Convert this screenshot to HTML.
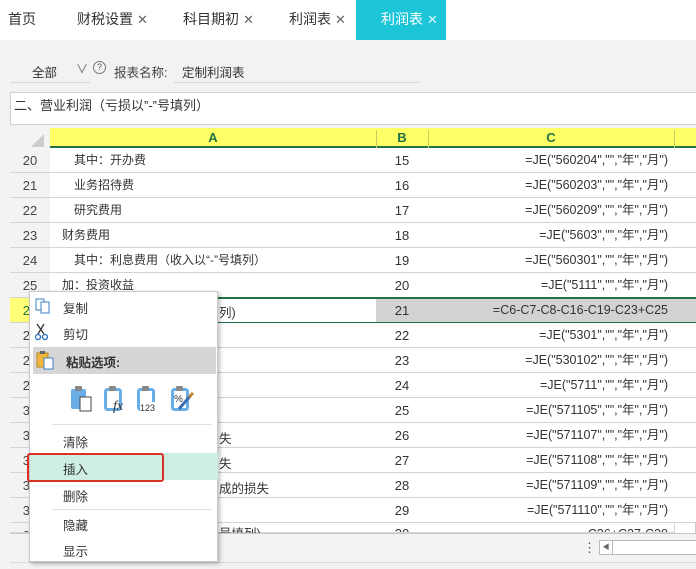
<!DOCTYPE html>
<html><head><meta charset="utf-8"><style>
*{margin:0;padding:0;box-sizing:border-box}
body{width:696px;height:569px;overflow:hidden;background:#f2f2f2;font-family:"Liberation Sans","Noto Sans CJK SC",sans-serif;font-size:12px;color:#333;position:relative}
.a{position:absolute}
.tabs{left:0;top:0;width:696px;height:40px;background:#fff}
.tab{top:0;height:40px;line-height:38px;font-size:14px;color:#333}
.x{font-size:13px;color:#666;margin-left:4px}
.cell{position:absolute;height:25px;line-height:25px;border-right:1px solid #d4d4d4;border-bottom:1px solid #d4d4d4;background:#fff;white-space:nowrap;overflow:hidden}
.rh{left:10px;width:41px;text-align:center;background:#f3f3f3;color:#444;font-size:13px}
.ca{left:50px;width:327px;padding-left:12px}
.cb{left:376px;width:53px;text-align:center;font-size:13px}
.cc{left:428px;width:247px;text-align:right;padding-right:6px;font-size:12.5px}
.cd{left:674px;width:30px}
.tail{position:absolute;left:219px;font-size:12.5px;white-space:nowrap}
.menu{left:29px;top:291px;width:189px;height:271px;background:#fff;border:1px solid #c8c8c8;box-shadow:2px 2px 4px rgba(0,0,0,.25)}
.mi{position:absolute;left:33px;font-size:12.5px;color:#333}
.sep{position:absolute;left:22px;width:160px;height:1px;background:#e0e0e0}
</style></head><body>
<div class="a tabs"></div>
<div class="a tab" style="left:8px">首页</div>
<div class="a tab" style="left:77px">财税设置<span class="x">✕</span></div>
<div class="a tab" style="left:183px">科目期初<span class="x">✕</span></div>
<div class="a tab" style="left:289px">利润表<span class="x">✕</span></div>
<div class="a tab" style="left:356px;width:90px;background:#1cc6d8;color:#fff;padding-left:25px">利润表<span class="x" style="color:#d8f6fa">✕</span></div>

<div class="a" style="left:32px;top:62px;font-size:12.5px">全部</div>
<div class="a" style="left:10px;top:82px;width:80px;height:1px;background:#d8d8d8"></div>
<div class="a" style="left:76px;top:60px;font-size:12px;color:#666">∨</div>
<div class="a" style="left:93px;top:61px;width:13px;height:13px;border:1px solid #777;border-radius:50%;font-size:9px;line-height:11px;text-align:center;color:#555">?</div>
<div class="a" style="left:114px;top:62px;font-size:12.5px;color:#444">报表名称:</div>
<div class="a" style="left:182px;top:62px;font-size:12.5px">定制利润表</div>
<div class="a" style="left:174px;top:82px;width:245px;height:1px;background:#d8d8d8"></div>

<div class="a" style="left:10px;top:92px;width:690px;height:33px;background:#fff;border:1px solid #d0d0d0;padding:2px 3px;font-size:13px">二、营业利润（亏损以”-”号填列）</div>

<div class="a" style="left:10px;top:128px;width:686px;height:406px;background:#fff;border:1px solid #c8c8c8"></div>
<div class="a" style="left:10px;top:128px;width:41px;height:20px;background:#f3f3f3;border-right:1px solid #d4d4d4"></div>
<div class="a" style="left:31px;top:134px;width:0;height:0;border-left:13px solid transparent;border-bottom:13px solid #ccc"></div>
<div class="a" style="left:50px;top:128px;width:646px;height:20px;background:#ffff66;border-bottom:2px solid #217346"></div>
<div class="a" style="left:50px;top:130px;width:327px;text-align:center;color:#217346;font-weight:bold;font-size:13px;border-right:1px solid #c8c864;height:18px">A</div>
<div class="a" style="left:376px;top:130px;width:53px;text-align:center;color:#217346;font-weight:bold;font-size:13px;border-right:1px solid #c8c864;height:18px">B</div>
<div class="a" style="left:428px;top:130px;width:247px;text-align:center;color:#217346;font-weight:bold;font-size:13px;border-right:1px solid #c8c864;height:18px">C</div>

<div class="cell rh" style="top:148px">20</div><div class="cell ca" style="top:148px;padding-left:24px">其中：开办费</div><div class="cell cb" style="top:148px">15</div><div class="cell cc" style="top:148px">=JE("560204","","年","月")</div><div class="cell cd" style="top:148px"></div>
<div class="cell rh" style="top:173px">21</div><div class="cell ca" style="top:173px;padding-left:24px">业务招待费</div><div class="cell cb" style="top:173px">16</div><div class="cell cc" style="top:173px">=JE("560203","","年","月")</div><div class="cell cd" style="top:173px"></div>
<div class="cell rh" style="top:198px">22</div><div class="cell ca" style="top:198px;padding-left:24px">研究费用</div><div class="cell cb" style="top:198px">17</div><div class="cell cc" style="top:198px">=JE("560209","","年","月")</div><div class="cell cd" style="top:198px"></div>
<div class="cell rh" style="top:223px">23</div><div class="cell ca" style="top:223px">财务费用</div><div class="cell cb" style="top:223px">18</div><div class="cell cc" style="top:223px">=JE("5603","","年","月")</div><div class="cell cd" style="top:223px"></div>
<div class="cell rh" style="top:248px">24</div><div class="cell ca" style="top:248px;padding-left:24px">其中：利息费用（收入以“-”号填列）</div><div class="cell cb" style="top:248px">19</div><div class="cell cc" style="top:248px">=JE("560301","","年","月")</div><div class="cell cd" style="top:248px"></div>
<div class="cell rh" style="top:273px">25</div><div class="cell ca" style="top:273px">加：投资收益</div><div class="cell cb" style="top:273px">20</div><div class="cell cc" style="top:273px">=JE("5111","","年","月")</div><div class="cell cd" style="top:273px"></div>
<div class="cell rh" style="top:298px;background:#ffff77;color:#217346">26</div><div class="cell ca" style="top:298px"></div><div class="cell cb" style="top:298px;background:#d2d2d2">21</div><div class="cell cc" style="top:298px;background:#d2d2d2">=C6-C7-C8-C16-C19-C23+C25</div><div class="cell cd" style="top:298px;background:#d2d2d2"></div>
<div class="tail" style="top:302px">列)</div>
<div class="a" style="left:50px;top:297px;width:646px;height:2px;background:#217346"></div>
<div class="a" style="left:50px;top:322px;width:646px;height:2px;background:#217346"></div>
<div class="cell rh" style="top:323px">27</div><div class="cell ca" style="top:323px"></div><div class="cell cb" style="top:323px">22</div><div class="cell cc" style="top:323px">=JE("5301","","年","月")</div><div class="cell cd" style="top:323px"></div>
<div class="cell rh" style="top:348px">28</div><div class="cell ca" style="top:348px"></div><div class="cell cb" style="top:348px">23</div><div class="cell cc" style="top:348px">=JE("530102","","年","月")</div><div class="cell cd" style="top:348px"></div>
<div class="cell rh" style="top:373px">29</div><div class="cell ca" style="top:373px"></div><div class="cell cb" style="top:373px">24</div><div class="cell cc" style="top:373px">=JE("5711","","年","月")</div><div class="cell cd" style="top:373px"></div>
<div class="cell rh" style="top:398px">30</div><div class="cell ca" style="top:398px"></div><div class="cell cb" style="top:398px">25</div><div class="cell cc" style="top:398px">=JE("571105","","年","月")</div><div class="cell cd" style="top:398px"></div>
<div class="cell rh" style="top:423px">31</div><div class="cell ca" style="top:423px"></div><div class="cell cb" style="top:423px">26</div><div class="cell cc" style="top:423px">=JE("571107","","年","月")</div><div class="cell cd" style="top:423px"></div>
<div class="tail" style="top:428px">失</div>
<div class="cell rh" style="top:448px">32</div><div class="cell ca" style="top:448px"></div><div class="cell cb" style="top:448px">27</div><div class="cell cc" style="top:448px">=JE("571108","","年","月")</div><div class="cell cd" style="top:448px"></div>
<div class="tail" style="top:453px">失</div>
<div class="cell rh" style="top:473px">33</div><div class="cell ca" style="top:473px"></div><div class="cell cb" style="top:473px">28</div><div class="cell cc" style="top:473px">=JE("571109","","年","月")</div><div class="cell cd" style="top:473px"></div>
<div class="tail" style="top:478px">成的损失</div>
<div class="cell rh" style="top:498px">34</div><div class="cell ca" style="top:498px"></div><div class="cell cb" style="top:498px">29</div><div class="cell cc" style="top:498px">=JE("571110","","年","月")</div><div class="cell cd" style="top:498px"></div>
<div class="cell rh" style="top:523px;height:10px">35</div><div class="cell ca" style="top:523px;height:10px"></div><div class="cell cb" style="top:523px;height:10px;line-height:22px">30</div><div class="cell cc" style="top:523px;height:10px;line-height:22px">=C26+C27-C30</div>
<div class="a" style="left:219px;top:523px;height:10px;overflow:hidden;font-size:12.5px;line-height:22px">号填列)</div>

<div class="a" style="left:10px;top:533px;width:686px;height:30px;background:#f3f3f3;border-top:1px solid #c8c8c8;border-bottom:1px solid #d8d8d8"></div>
<div class="a" style="left:583px;top:540px;font-size:13px;color:#555">⋮</div>
<div class="a" style="left:599px;top:540px;width:100px;height:15px;background:#fff;border:1px solid #bbb"></div>
<div class="a" style="left:599px;top:540px;width:14px;height:15px;border:1px solid #bbb;font-size:7px;line-height:13px;text-align:center;color:#666">◀</div>

<div class="a menu">
 <svg class="a" style="left:4px;top:5px" width="18" height="18" viewBox="0 0 18 18"><rect x="2" y="2" width="8" height="11" fill="#fff" stroke="#3a7fc4"/><rect x="7" y="5" width="8" height="11" fill="#fff" stroke="#3a7fc4"/></svg>
 <div class="mi" style="top:6px">复制</div>
 <svg class="a" style="left:4px;top:31px" width="16" height="18" viewBox="0 0 16 18"><path d="M3 1 L10 11 M10 1 L4 11" stroke="#333" stroke-width="1.3" fill="none"/><circle cx="4" cy="14" r="2.5" fill="none" stroke="#2a6fc0" stroke-width="1.3"/><circle cx="11" cy="14" r="2.5" fill="none" stroke="#2a6fc0" stroke-width="1.3"/></svg>
 <div class="mi" style="top:32px">剪切</div>
 <div class="a" style="left:3px;top:55px;width:183px;height:27px;background:#d6d6d6"></div>
 <svg class="a" style="left:6px;top:58px" width="20" height="20" viewBox="0 0 20 20"><rect x="1" y="3" width="11" height="14" fill="#f0b83c" stroke="#b8862a"/><rect x="4" y="1" width="5" height="3" fill="#666"/><rect x="8" y="8" width="9" height="11" fill="#fff" stroke="#3a7fc4"/></svg>
 <div class="mi" style="top:60px;left:36px;font-weight:bold;color:#333">粘贴选项:</div>
 <svg class="a" style="left:40px;top:93px" width="24" height="28" viewBox="0 0 24 28"><rect x="1" y="4" width="15" height="20" rx="2" fill="#6aaee8"/><rect x="5" y="1" width="7" height="5" rx="1" fill="#888"/><rect x="10" y="12" width="11" height="14" fill="#fff" stroke="#444"/></svg>
 <svg class="a" style="left:74px;top:93px" width="24" height="28" viewBox="0 0 24 28"><rect x="1.5" y="4.5" width="15" height="20" rx="2" fill="#fff" stroke="#6aaee8" stroke-width="3"/><rect x="5" y="1" width="7" height="5" rx="1" fill="#888"/><text x="9" y="25" font-size="14" font-style="italic" font-family="Liberation Serif,serif" fill="#333">fx</text></svg>
 <svg class="a" style="left:107px;top:93px" width="26" height="28" viewBox="0 0 26 28"><rect x="1.5" y="4.5" width="15" height="20" rx="2" fill="#fff" stroke="#6aaee8" stroke-width="3"/><rect x="5" y="1" width="7" height="5" rx="1" fill="#888"/><rect x="3" y="17" width="22" height="10" fill="#fff"/><text x="3" y="26" font-size="9" font-family="Liberation Sans,sans-serif" fill="#333">123</text></svg>
 <svg class="a" style="left:141px;top:93px" width="24" height="28" viewBox="0 0 24 28"><rect x="1.5" y="4.5" width="15" height="20" rx="2" fill="#fff" stroke="#6aaee8" stroke-width="3"/><rect x="5" y="1" width="7" height="5" rx="1" fill="#888"/><text x="3" y="17" font-size="10" font-family="Liberation Sans,sans-serif" fill="#333">%</text><path d="M8 24 L20 10" stroke="#3a6fb0" stroke-width="3"/><path d="M18 12 L22 8" stroke="#c8842a" stroke-width="3"/></svg>
 <div class="sep" style="top:132px"></div>
 <div class="mi" style="top:140px">清除</div>
 <div class="a" style="left:0;top:161px;width:188px;height:27px;background:#cdeee0"></div>
 <div class="mi" style="top:167px">插入</div>
 <div class="mi" style="top:194px">删除</div>
 <div class="sep" style="top:217px"></div>
 <div class="mi" style="top:223px">隐藏</div>
 <div class="mi" style="top:249px">显示</div>
</div>
<div class="a" style="left:27px;top:453px;width:137px;height:29px;border:2.5px solid #d93025;border-radius:3px"></div>
</body></html>
